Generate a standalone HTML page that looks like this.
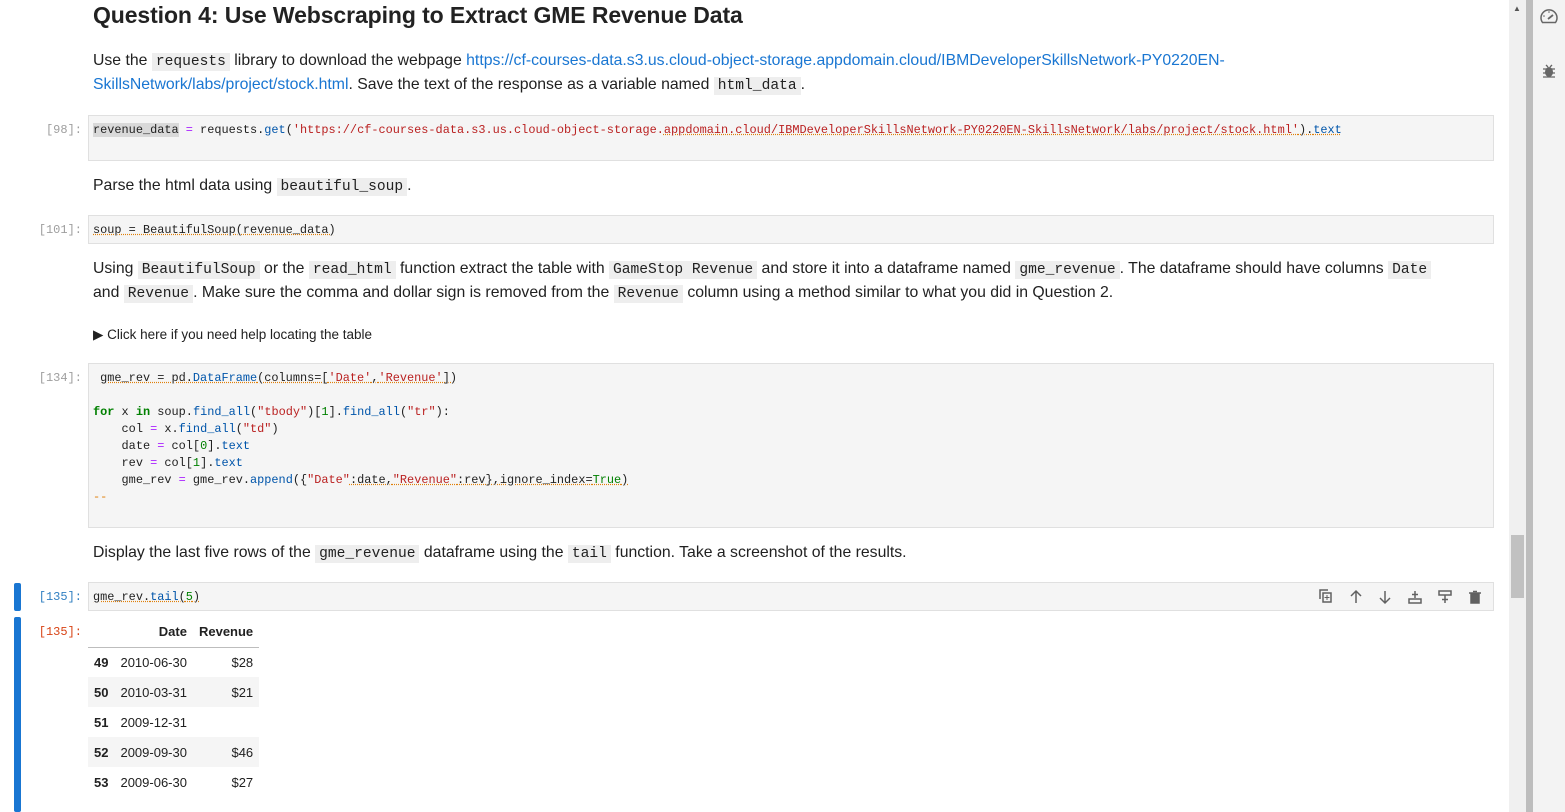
<!DOCTYPE html>
<html><head><meta charset="utf-8"><style>
*{margin:0;padding:0;box-sizing:border-box}
body{width:1565px;height:812px;overflow:hidden;background:#fff;font-family:"Liberation Sans",sans-serif;color:#212121;position:relative}
.a{position:absolute;white-space:nowrap}
.t{font-size:15.8px;line-height:24px}
code{font-family:"Liberation Mono",monospace;font-size:14.6px;background:#eee;padding:1px 4px;color:#212121}
a{color:#1976d2;text-decoration:none}
.cell{position:absolute;left:88px;width:1406px;background:#f5f5f5;border:1px solid #e0e0e0}
.pr{position:absolute;width:82px;text-align:right;font-family:"Liberation Mono",monospace;font-size:12px;color:#9e9e9e;left:0}
.code{position:absolute;left:93px;font-family:"Liberation Mono",monospace;font-size:11.9px;line-height:17px;white-space:pre;color:#212121}
.k{color:#008000;font-weight:bold}.s{color:#ba2121}.f{color:#0055aa}.o{color:#aa22ff}.n{color:#008000}
.u{text-decoration:underline dotted #e0800a}
table{border-collapse:collapse;font-size:13px}
td,th{height:30px;padding:0 6px;text-align:right}
</style></head><body>
<div class="a" style="left:93px;top:2px;font-size:23px;font-weight:bold;color:#222;letter-spacing:-0.1px">Question 4: Use Webscraping to Extract GME Revenue Data</div>
<div class="a t" style="left:93px;top:49px">Use the <code>requests</code> library to download the webpage <a>https://cf-courses-data.s3.us.cloud-object-storage.appdomain.cloud/IBMDeveloperSkillsNetwork-PY0220EN-</a></div>
<div class="a t" style="left:93px;top:73px"><a>SkillsNetwork/labs/project/stock.html</a>. Save the text of the response as a variable named <code>html_data</code>.</div>

<div class="pr" style="top:123px">[98]:</div>
<div class="cell" style="top:115px;height:46px"></div>
<div class="code" style="top:122px"><span style="background:#d9d9d9">revenue_data</span> <span class="o">=</span> requests.<span class="f">get</span>(<span class="s">'https://cf-courses-data.s3.us.cloud-object-storage.<span class="u">appdomain.cloud/IBMDeveloperSkillsNetwork-PY0220EN-SkillsNetwork/labs/project/stock.html'</span></span><span class="u">).<span class="f">text</span></span></div>

<div class="a t" style="left:93px;top:174px">Parse the html data using <code>beautiful_soup</code>.</div>

<div class="pr" style="top:223px">[101]:</div>
<div class="cell" style="top:215px;height:29px"></div>
<div class="code u" style="top:222px">soup = BeautifulSoup(revenue_data)</div>

<div class="a t" style="left:93px;top:257px">Using <code>BeautifulSoup</code> or the <code>read_html</code> function extract the table with <code>GameStop Revenue</code> and store it into a dataframe named <code>gme_revenue</code>. The dataframe should have columns <code>Date</code></div>
<div class="a t" style="left:93px;top:281px">and <code>Revenue</code>. Make sure the comma and dollar sign is removed from the <code>Revenue</code> column using a method similar to what you did in Question 2.</div>

<div class="a" style="left:93px;top:327px;font-size:13.5px">▶ Click here if you need help locating the table</div>

<div class="pr" style="top:371px">[134]:</div>
<div class="cell" style="top:363px;height:165px"></div>
<div class="code" style="top:370px"> <span class="u">gme_rev = pd.<span class="f">DataFrame</span>(columns=[<span class="s">'Date'</span>,<span class="s">'Revenue'</span>])</span>

<span class="k">for</span> x <span class="k">in</span> soup.<span class="f">find_all</span>(<span class="s">"tbody"</span>)[<span class="n">1</span>].<span class="f">find_all</span>(<span class="s">"tr"</span>):
    col <span class="o">=</span> x.<span class="f">find_all</span>(<span class="s">"td"</span>)
    date <span class="o">=</span> col[<span class="n">0</span>].<span class="f">text</span>
    rev <span class="o">=</span> col[<span class="n">1</span>].<span class="f">text</span>
    gme_rev <span class="o">=</span> gme_rev.<span class="f">append</span>({<span class="s">"Date"</span><span class="u">:date,<span class="s">"Revenue"</span>:rev},ignore_index=<span class="n">True</span>)</span>
<span style="color:#e0800a">--</span></div>

<div class="a t" style="left:93px;top:541px">Display the last five rows of the <code>gme_revenue</code> dataframe using the <code>tail</code> function. Take a screenshot of the results.</div>

<div class="a" style="left:14px;top:583px;width:7px;height:28px;background:#1976d2;border-radius:2px"></div>
<div class="pr" style="top:590px;color:#307fc1">[135]:</div>
<div class="cell" style="top:582px;height:29px"></div>
<div class="code u" style="top:589px">gme_rev.<span class="f">tail</span>(<span class="n">5</span>)</div>
<svg class="a" style="left:1316px;top:588px" width="170" height="18" viewBox="0 0 170 18" fill="none" stroke="#616161" stroke-width="1.5">
<rect x="7" y="5" width="8" height="9"/><path d="M4 11V2h8"/><path d="M11 7v5M8.5 9.5h5" stroke-width="1"/>
<path d="M40 15V3M35 8l5-5 5 5"/>
<path d="M69 3v12M64 10l5 5 5-5"/>
<path d="M99 3v7M96 6.5h6"/><rect x="93" y="11" width="12" height="4"/>
<rect x="123" y="3" width="12" height="4"/><path d="M129 7v8M126 11.5h6"/>
<path d="M153 5h12" stroke-width="1.5"/><path d="M155 6h8v9h-8z" fill="#616161"/><path d="M157 3.5h4"/>
</svg>

<div class="a" style="left:14px;top:617px;width:7px;height:195px;background:#1976d2;border-radius:2px"></div>
<div class="pr" style="top:625px;color:#d84315">[135]:</div>
<table class="a" style="left:88px;top:617px">
<tr style="border-bottom:1px solid #bdbdbd"><th></th><th>Date</th><th>Revenue</th></tr>
<tr><th>49</th><td style="text-align:left">2010-06-30</td><td>$28</td></tr>
<tr style="background:#f5f5f5"><th>50</th><td style="text-align:left">2010-03-31</td><td>$21</td></tr>
<tr><th>51</th><td style="text-align:left">2009-12-31</td><td></td></tr>
<tr style="background:#f5f5f5"><th>52</th><td style="text-align:left">2009-09-30</td><td>$46</td></tr>
<tr><th>53</th><td style="text-align:left">2009-06-30</td><td>$27</td></tr>
</table>

<div class="a" style="left:1509px;top:0;width:17px;height:812px;background:#f0f0f0"></div>
<div class="a" style="left:1513px;top:4px;font-size:8px;color:#555">▲</div>
<div class="a" style="left:1511px;top:535px;width:13px;height:63px;background:#c1c1c1"></div>
<div class="a" style="left:1526px;top:0;width:7px;height:812px;background:#bdbdbd"></div>
<div class="a" style="left:1533px;top:0;width:32px;height:812px;background:#f3f3f3"></div>
<svg class="a" style="left:1539px;top:7px" width="20" height="18" viewBox="0 0 20 18"><path d="M3.5 15.5A8 8 0 1 1 16.5 15.5Z" fill="none" stroke="#666" stroke-width="1.5"/><path d="M9 12L14 8" stroke="#666" stroke-width="1.8"/><circle cx="5" cy="9" r=".8" fill="#666"/><circle cx="10" cy="5" r=".8" fill="#666"/></svg>
<svg class="a" style="left:1542px;top:63px" width="14" height="16" viewBox="0 0 14 16"><ellipse cx="7" cy="9" rx="4" ry="5" fill="#666"/><path d="M1 6h12M1 10h12M1 14h12M4 2l2 2M10 2l-2 2" stroke="#666" stroke-width="1.3"/></svg>
</body></html>
